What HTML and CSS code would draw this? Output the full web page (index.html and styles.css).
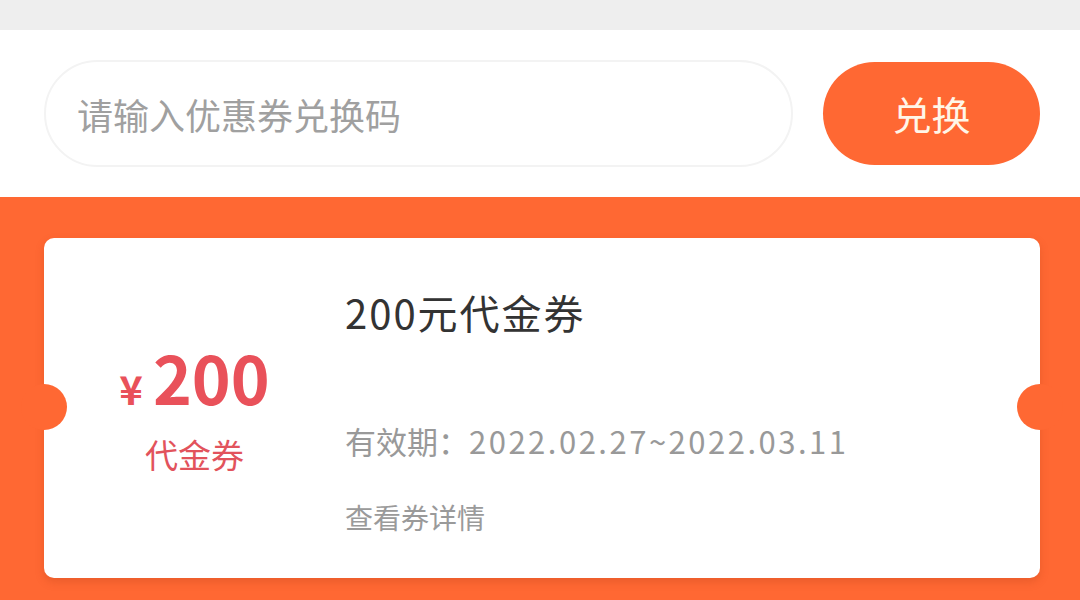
FILE: index.html
```html
<!DOCTYPE html>
<html lang="zh-CN">
<head>
<meta charset="utf-8">
<title>兑换优惠券</title>
<link rel="stylesheet" href="styles.css">
</head>
<body>
<div class="topbar"></div>
<div class="redeem">
  <input class="code-input" type="text" placeholder="请输入优惠券兑换码">
  <button class="redeem-btn">兑换</button>
</div>
<div class="coupons">
  <div class="card">
    <div class="card-left">
      <div class="amount"><span class="yen">¥</span><span class="num">200</span></div>
      <div class="kind">代金券</div>
    </div>
    <div class="card-right">
      <div class="title">200元代金券</div>
      <div class="valid">有效期：<span class="dates">2022.02.27~2022.03.11</span></div>
      <div class="detail">查看券详情</div>
    </div>
  </div>
</div>
</body>
</html>
```

FILE: styles.css
```css
html, body {
  margin: 0;
  padding: 0;
}
body {
  width: 1080px;
  height: 600px;
  overflow: hidden;
  font-family: "Noto Sans CJK SC", "Noto Sans", sans-serif;
  background: #ff6833;
}
.topbar {
  height: 30px;
  background: #eeeeee;
}
.redeem {
  background: #ffffff;
  display: flex;
  align-items: center;
  padding: 30px 40px 30px 44px;
  gap: 30px;
}
.code-input {
  flex: 1;
  box-sizing: border-box;
  height: 107px;
  border: 2px solid #f3f3f3;
  border-radius: 54px;
  padding: 0 0 0 31px;
  font-family: inherit;
  font-size: 36px;
  color: #333;
  outline: none;
  background: #fff;
}
.code-input::placeholder {
  color: #a0a0a0;
}
.redeem-btn {
  width: 217px;
  height: 103px;
  border: none;
  border-radius: 52px;
  background: #ff6833;
  color: #fff6e8;
  font-family: inherit;
  font-size: 39px;
  padding: 0;
  line-height: 1;
}
.coupons {
  padding: 41px 40px 0 44px;
}
.card {
  position: relative;
  display: flex;
  height: 340px;
  background: #ffffff;
  border-radius: 10px;
  box-shadow: 0 4px 8px rgba(170, 60, 20, 0.25);
}
.card::before,
.card::after {
  content: "";
  position: absolute;
  top: 169px;
  width: 46px;
  height: 46px;
  margin-top: -23px;
  border-radius: 50%;
  background: #ff6833;
}
.card::before { left: -23px; }
.card::after { right: -23px; }
.card-left {
  width: 301px;
  display: flex;
  flex-direction: column;
  align-items: center;
  justify-content: center;
  color: #e9515a;
}
.amount {
  display: flex;
  align-items: baseline;
  height: 70px;
}
.yen {
  font-size: 40px;
  font-weight: 700;
  line-height: 40px;
  margin-right: 10px;
}
.num {
  font-size: 66px;
  font-weight: 700;
  line-height: 70px;
}
.kind {
  margin-top: 22px;
  font-size: 33px;
  line-height: 42px;
  color: #e2535c;
}
.card-right {
  display: flex;
  flex-direction: column;
  padding-top: 50px;
}
.title {
  font-size: 40px;
  line-height: 48px;
  letter-spacing: 2px;
  color: #333333;
}
.valid {
  margin-top: 85px;
  font-size: 31px;
  line-height: 40px;
  color: #999999;
}
.dates {
  letter-spacing: 2.5px;
}
.detail {
  margin-top: 38px;
  font-size: 28px;
  line-height: 36px;
  color: #9a9a9a;
}
```
